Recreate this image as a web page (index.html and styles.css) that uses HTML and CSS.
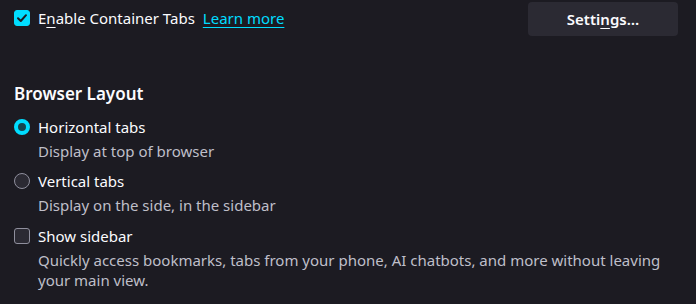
FILE: index.html
```html
<!DOCTYPE html>
<html lang="en">
<head>
    <meta charset="UTF-8">
    <title>Browser Layout</title>
    <link rel="stylesheet" href="styles.css">
</head>
<body>
    <div class="pane">
        <!-- Container tabs row -->
        <div class="top-row">
            <label class="option">
                <span class="checkbox checked">
                    <svg viewBox="0 0 16 16" width="16" height="16"><path d="M4 8.2 L6.8 11 L12 5.2" fill="none" stroke="#1c1b22" stroke-width="2" stroke-linecap="round" stroke-linejoin="round"/></svg>
                </span>
                <span>E<u>n</u>able Container Tabs</span>
                <a class="learn-more" href="#">Learn more</a>
            </label>
            <button class="btn">Setti<u>n</u>gs…</button>
        </div>

        <!-- Browser layout section -->
        <h2 class="section-title">Browser Layout</h2>

        <div class="choice">
            <label class="option">
                <span class="radio checked"></span>
                <span>Horizontal tabs</span>
            </label>
            <div class="desc">Display at top of browser</div>
        </div>

        <div class="choice">
            <label class="option">
                <span class="radio"></span>
                <span>Vertical tabs</span>
            </label>
            <div class="desc">Display on the side, in the sidebar</div>
        </div>

        <div class="choice sidebar-choice">
            <label class="option">
                <span class="checkbox"></span>
                <span>Show sidebar</span>
            </label>
            <div class="desc">Quickly access bookmarks, tabs from your phone, AI chatbots, and more without leaving your main view.</div>
        </div>
    </div>
</body>
</html>
```

FILE: styles.css
```css
body {
    margin: 0;
    background-color: #1c1b22;
    color: #fbfbfe;
    font-family: "Noto Sans", "Open Sans", sans-serif;
    font-size: 15px;
    overflow: hidden;
}

.pane {
    padding: 0 18px 0 14px;
}

.top-row {
    display: flex;
    justify-content: space-between;
    align-items: center;
    height: 36px;
}

.option {
    display: flex;
    align-items: center;
    gap: 8px;
    line-height: 20px;
}

.option u {
    text-decoration-thickness: 1px;
    text-underline-offset: 3px;
}

.learn-more {
    color: #00ddff;
    text-underline-offset: 3px;
}

.checkbox {
    width: 16px;
    height: 16px;
    box-sizing: border-box;
    border: 1px solid #8f8f9d;
    border-radius: 3px;
    background-color: #2b2a33;
    flex-shrink: 0;
}

.checkbox.checked {
    background-color: #00ddff;
    border-color: #00ddff;
}

.checkbox svg {
    display: block;
    margin: -1px;
}

.radio {
    width: 16px;
    height: 16px;
    box-sizing: border-box;
    border: 1px solid #8f8f9d;
    border-radius: 50%;
    background-color: #2b2a33;
    flex-shrink: 0;
}

.radio.checked {
    border: 4px solid #00ddff;
    background-color: #15454f;
}

.btn {
    width: 150px;
    height: 34px;
    margin-top: 2px;
    background-color: #2b2a33;
    color: #fbfbfe;
    border: none;
    border-radius: 4px;
    font-family: inherit;
    font-size: 15px;
    font-weight: 600;
}

.btn u {
    text-underline-offset: 3px;
}

.section-title {
    margin: 46px 0 11px;
    font-size: 17px;
    font-weight: 600;
    line-height: 24px;
}

.choice {
    margin-bottom: 10px;
}

.sidebar-choice {
    padding-top: 1px;
}

.desc {
    margin-top: 4px;
    padding-left: 24px;
    color: #bfbfc9;
    line-height: 20px;
}
```
